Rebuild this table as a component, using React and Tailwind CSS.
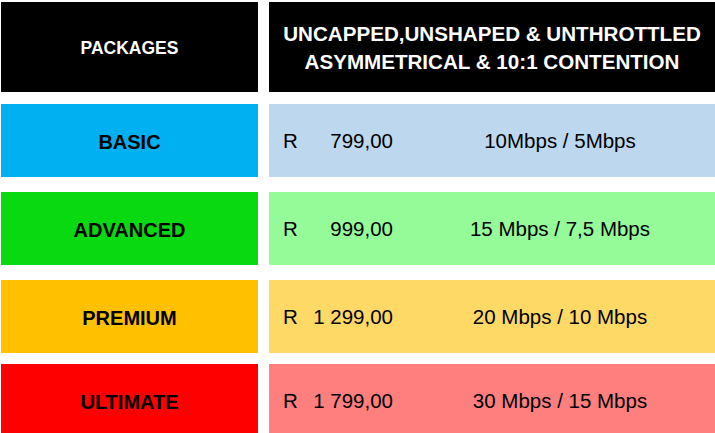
import React from 'react';

const packages = [
  {
    name: 'BASIC',
    price: '799,00',
    speed: '10Mbps / 5Mbps',
    gap: 'mt-[12px]',
    dark: 'bg-[#00b0f0]',
    light: 'bg-[#bdd7ee]',
  },
  {
    name: 'ADVANCED',
    price: '999,00',
    speed: '15 Mbps / 7,5 Mbps',
    gap: 'mt-[15px]',
    dark: 'bg-[#08d910]',
    light: 'bg-[#95fa98]',
  },
  {
    name: 'PREMIUM',
    price: '1 299,00',
    speed: '20 Mbps / 10 Mbps',
    gap: 'mt-[15px]',
    dark: 'bg-[#ffc000]',
    light: 'bg-[#ffd966]',
  },
  {
    name: 'ULTIMATE',
    price: '1 799,00',
    speed: '30 Mbps / 15 Mbps',
    gap: 'mt-[11px]',
    dark: 'bg-[#ff0000]',
    light: 'bg-[#ff7f7f]',
  },
];

export default function App() {
  return (
    <div
      className="h-[433px] w-[715px] overflow-hidden bg-white pl-[1px] pt-[2px] text-black"
      style={{ fontFamily: '"Liberation Sans", Arial, sans-serif' }}
    >
      {/* Header */}
      <div className="grid h-[90px] grid-cols-[257px_446px] gap-[11px]">
        <div className="flex items-center justify-center bg-black pt-[3px] text-[17.5px] font-bold text-white">
          PACKAGES
        </div>
        <div className="flex flex-col items-center justify-center bg-black pt-[2px] text-center text-[20.6px] font-bold leading-[28px] text-white">
          <span>UNCAPPED,UNSHAPED &amp; UNTHROTTLED</span>
          <span>ASYMMETRICAL &amp; 10:1 CONTENTION</span>
        </div>
      </div>

      {/* Package rows */}
      {packages.map((p) => (
        <div key={p.name} className={`grid h-[73px] grid-cols-[257px_446px] gap-[11px] ${p.gap}`}>
          <div className={`flex items-center justify-center pt-[2px] text-[20px] font-bold ${p.dark}`}>
            {p.name}
          </div>
          <div className={`flex items-center pt-[2px] text-[20.5px] ${p.light}`}>
            <div className="flex w-[136px] justify-between pl-[14px] pr-[12px]">
              <span>R</span>
              <span>{p.price}</span>
            </div>
            <div className="flex-1 text-center">{p.speed}</div>
          </div>
        </div>
      ))}
    </div>
  );
}
